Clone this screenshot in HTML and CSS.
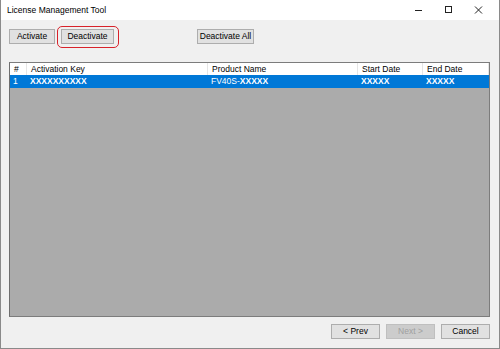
FILE: index.html
```html
<!DOCTYPE html>
<html>
<head>
<meta charset="utf-8">
<link rel="stylesheet" href="styles.css">
</head>
<body>
<div class="window">
  <div class="titlebar">
    <span class="title">License Management Tool</span>
    <div class="controls">
      <svg class="ctl" width="30" height="20" viewBox="0 0 30 20"><line x1="11" y1="10.5" x2="18" y2="10.5" stroke="#222" stroke-width="1"/></svg>
      <svg class="ctl" width="30" height="20" viewBox="0 0 30 20"><rect x="11.5" y="6.5" width="6" height="6" fill="none" stroke="#222" stroke-width="1"/></svg>
      <svg class="ctl" width="30" height="20" viewBox="0 0 30 20"><path d="M11 6.5 L18 13.5 M18 6.5 L11 13.5" stroke="#222" stroke-width="1"/></svg>
    </div>
  </div>
  <div class="content">
    <div class="toolbar">
      <button class="btn w-activate">Activate</button>
      <span class="highlight-wrap">
        <button class="btn w-deactivate">Deactivate</button>
        <span class="highlight"></span>
      </span>
      <button class="btn w-deactivate-all">Deactivate All</button>
    </div>
    <div class="list">
      <div class="row header">
        <div class="cell c-num">#</div>
        <div class="cell c-key">Activation Key</div>
        <div class="cell c-prod">Product Name</div>
        <div class="cell c-start">Start Date</div>
        <div class="cell c-end">End Date</div>
      </div>
      <div class="row selected">
        <div class="cell c-num">1</div>
        <div class="cell c-key"><b>XXXXXXXXXX</b></div>
        <div class="cell c-prod">FV40S-<b>XXXXX</b></div>
        <div class="cell c-start"><b>XXXXX</b></div>
        <div class="cell c-end"><b>XXXXX</b></div>
      </div>
      <div class="list-fill"></div>
    </div>
    <div class="footer">
      <button class="btn w-nav">&lt; Prev</button>
      <button class="btn w-nav disabled">Next &gt;</button>
      <button class="btn w-nav">Cancel</button>
    </div>
  </div>
</div>
</body>
</html>
```
FILE: styles.css
```css
* { box-sizing: border-box; }
html, body { margin: 0; padding: 0; }
body {
  width: 500px;
  height: 349px;
  font-family: "Liberation Sans", Arial, sans-serif;
  font-size: 8.5px;
  color: #000;
  background: #ffffff;
}
.window {
  width: 500px;
  height: 349px;
  border: 1px solid #8a8a8a;
  border-top: none;
  display: flex;
  flex-direction: column;
  background: #f0f0f0;
}
.titlebar {
  height: 20px;
  background: #ffffff;
  display: flex;
  align-items: center;
  justify-content: space-between;
}
.title {
  padding-left: 6px;
  font-size: 8.5px;
  line-height: 20px;
  color: #000;
}
.controls {
  display: flex;
  margin-right: 5px;
}
.ctl { display: block; }
.content {
  flex: 1;
  display: flex;
  flex-direction: column;
  padding: 9px 9px 8px 8px;
}
.toolbar {
  display: flex;
  align-items: center;
  height: 15px;
}
.btn {
  font-family: inherit;
  font-size: 8.5px;
  height: 15px;
  line-height: 13px;
  padding: 0;
  margin: 0;
  background: #e1e1e1;
  border: 1px solid #adadad;
  color: #000;
  text-align: center;
  white-space: nowrap;
}
.w-activate { width: 46px; }
.w-deactivate { width: 53px; }
.w-deactivate-all { width: 57px; margin-left: 83px; }
.highlight-wrap {
  position: relative;
  display: inline-block;
  margin-left: 6px;
  height: 15px;
}
.highlight-wrap .btn { display: block; }
.highlight {
  position: absolute;
  left: -4px;
  top: -3px;
  right: -5px;
  bottom: -4px;
  border: 1.5px solid #d8222a;
  border-radius: 5px;
}
.list {
  margin-top: 18px;
  height: 255px;
  border: 1px solid #7c7c7c;
  border-left-color: #6e6e6e;
  display: flex;
  flex-direction: column;
  background: #ababab;
}
.row {
  display: flex;
  height: 13px;
  line-height: 13px;
}
.header {
  background: #ffffff;
  height: 12px;
  line-height: 12px;
}
.header .cell { border-right: 1px solid #e5e5e5; }
.selected {
  background: #0078d7;
  color: #ffffff;
}
.cell {
  padding-left: 4px;
  white-space: nowrap;
  overflow: hidden;
}
.selected .cell { padding-left: 3px; }
.selected b { font-weight: 700; }
.c-num { width: 17px; }
.c-key { width: 181px; }
.c-prod { width: 150px; }
.c-start { width: 65px; }
.c-end { width: 66px; }
.list-fill { flex: 1; }
.footer {
  margin-top: 7px;
  display: flex;
  justify-content: flex-end;
  gap: 6px;
}
.w-nav { width: 49px; }
.disabled {
  background: #cccccc;
  border-color: #bfbfbf;
  color: #a0a0a0;
}
```
